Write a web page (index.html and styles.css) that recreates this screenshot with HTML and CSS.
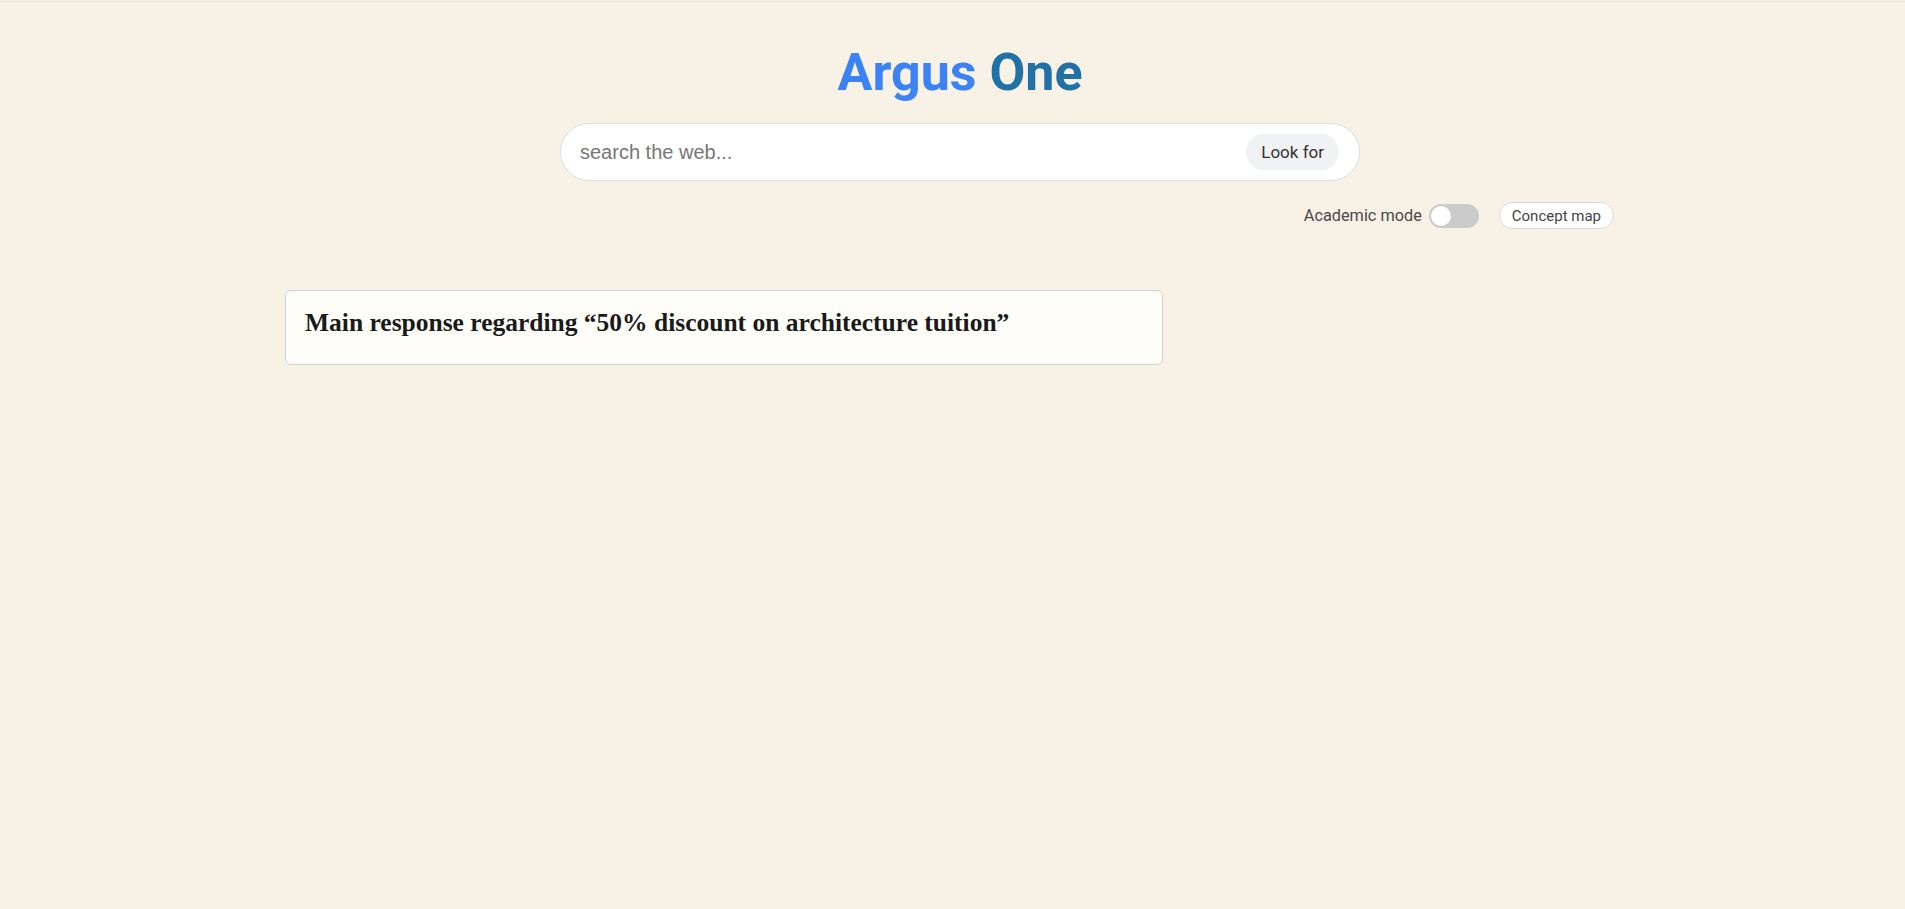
FILE: index.html
```html
<!DOCTYPE html>
<html>
<head>
<meta charset="UTF-8">
<title>Argus One</title>
<link rel="stylesheet" href="styles.css">
</head>
<body>
<div class="topline"></div>
<div class="page">
  <h1 class="logo"><span class="logo-a">Argus</span> <span class="logo-b">One</span></h1>

  <form class="search" onsubmit="return false;">
    <input class="search-input" type="text" placeholder="search the web...">
    <button class="search-btn" type="submit">Look for</button>
  </form>

  <div class="tools">
    <label class="mode">
      <span class="mode-label">Academic mode</span>
      <span class="switch"><span class="knob"></span></span>
    </label>
    <button class="map-btn" type="button">Concept map</button>
  </div>

  <div class="results">
    <div class="card">
      <h2 class="card-title">Main response regarding “50% discount on architecture tuition”</h2>
    </div>
  </div>
</div>
</body>
</html>
```

FILE: styles.css
```css
html {
  background-color: #f7f1e6;
}
body {
  margin: 0;
  padding-left: 15px;
  font-family: Roboto, "Liberation Sans", Arial, sans-serif;
  color: #333;
}
.topline {
  height: 1px;
  margin-top: 1px;
  margin-left: -15px;
  background-color: #e2e6d5;
}
.page {
  max-width: 1350px;
  margin: 0 auto;
}
.logo {
  margin: 40px 0 0;
  text-align: center;
  font-size: 52px;
  font-weight: 700;
  line-height: 61px;
}
.logo-a {
  color: #3b82f6;
}
.logo-b {
  color: #2170a6;
}
.search {
  width: 800px;
  height: 58px;
  box-sizing: border-box;
  margin: 20px auto 0;
  display: flex;
  align-items: center;
  background-color: #fff;
  border: 1px solid #dedede;
  border-radius: 30px;
  padding: 0 20px 0 19px;
}
.search-input {
  flex: 1;
  border: none;
  outline: none;
  background: transparent;
  font-family: "Liberation Sans", Arial, sans-serif;
  font-size: 20px;
  color: #333;
  padding: 0;
}
.search-input::placeholder {
  color: #777;
}
.search-btn {
  height: 36px;
  padding: 0 15px;
  border: none;
  border-radius: 18px;
  background-color: #f1f2f4;
  font-family: Roboto, sans-serif;
  font-size: 17px;
  color: #333;
  cursor: pointer;
}
.tools {
  display: flex;
  justify-content: flex-end;
  align-items: center;
  gap: 20px;
  margin-top: 21px;
  padding-right: 21px;
}
.mode {
  display: flex;
  align-items: center;
  gap: 7px;
  cursor: pointer;
}
.mode-label {
  font-size: 16.3px;
  color: #4a4a4a;
}
.switch {
  position: relative;
  width: 50px;
  height: 24px;
  border-radius: 12px;
  background-color: #cbcbcb;
}
.knob {
  position: absolute;
  left: 2px;
  top: 2px;
  width: 20px;
  height: 20px;
  border-radius: 50%;
  background-color: #fff;
}
.map-btn {
  height: 27px;
  padding: 0 12px;
  background-color: #fff;
  border: 1px solid #d9d9d9;
  border-radius: 14px;
  font-family: Roboto, sans-serif;
  font-size: 15px;
  color: #444;
  cursor: pointer;
}
.results {
  margin-top: 61px;
}
.card {
  width: 65%;
  box-sizing: border-box;
  background-color: #fffdf8;
  border: 1px solid #d3d3d3;
  border-radius: 6px;
  padding: 16px 19px 25px;
}
.card-title {
  margin: 0;
  font-family: "Liberation Serif", "Times New Roman", serif;
  font-weight: 700;
  font-size: 25.5px;
  line-height: 32px;
  color: #1a1a1a;
}
```
